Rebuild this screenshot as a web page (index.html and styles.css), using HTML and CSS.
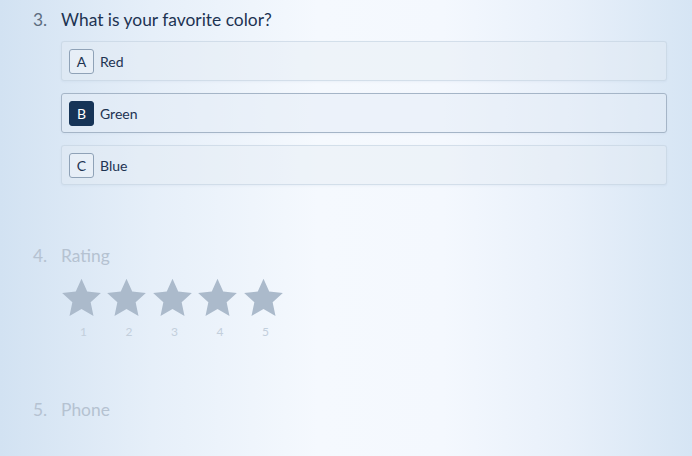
FILE: index.html
```html
<!DOCTYPE html>
<html>
<head>
<meta charset="utf-8">
<link rel="stylesheet" href="styles.css">
</head>
<body>
<div class="page">
  <section class="question">
    <h2 class="q-title"><span class="q-num">3.</span><span class="q-text">What is your favorite color?</span></h2>
    <div class="options">
      <div class="option"><span class="key">A</span><span class="label">Red</span></div>
      <div class="option selected"><span class="key">B</span><span class="label">Green</span></div>
      <div class="option"><span class="key">C</span><span class="label">Blue</span></div>
    </div>
  </section>

  <section class="question faded rating-q">
    <h2 class="q-title"><span class="q-num">4.</span><span class="q-text">Rating</span></h2>
    <div class="stars">
      <div class="star-item"><svg class="star" viewBox="0 0 24 24"><path d="M12 1.6l3.2 7.1 7.6.8-5.7 5.2 1.6 7.6L12 18.4l-6.7 3.9 1.6-7.6-5.7-5.2 7.6-.8z"/></svg><span class="star-num">1</span></div>
      <div class="star-item"><svg class="star" viewBox="0 0 24 24"><path d="M12 1.6l3.2 7.1 7.6.8-5.7 5.2 1.6 7.6L12 18.4l-6.7 3.9 1.6-7.6-5.7-5.2 7.6-.8z"/></svg><span class="star-num">2</span></div>
      <div class="star-item"><svg class="star" viewBox="0 0 24 24"><path d="M12 1.6l3.2 7.1 7.6.8-5.7 5.2 1.6 7.6L12 18.4l-6.7 3.9 1.6-7.6-5.7-5.2 7.6-.8z"/></svg><span class="star-num">3</span></div>
      <div class="star-item"><svg class="star" viewBox="0 0 24 24"><path d="M12 1.6l3.2 7.1 7.6.8-5.7 5.2 1.6 7.6L12 18.4l-6.7 3.9 1.6-7.6-5.7-5.2 7.6-.8z"/></svg><span class="star-num">4</span></div>
      <div class="star-item"><svg class="star" viewBox="0 0 24 24"><path d="M12 1.6l3.2 7.1 7.6.8-5.7 5.2 1.6 7.6L12 18.4l-6.7 3.9 1.6-7.6-5.7-5.2 7.6-.8z"/></svg><span class="star-num">5</span></div>
    </div>
  </section>

  <section class="question faded phone-q">
    <h2 class="q-title"><span class="q-num">5.</span><span class="q-text">Phone</span></h2>
  </section>
</div>
</body>
</html>
```

FILE: styles.css
```css
html, body {
  margin: 0;
  padding: 0;
  height: 100%;
}
body {
  font-family: Lato, "Open Sans", "Liberation Sans", sans-serif;
  background: linear-gradient(90deg, #d2e2f2 0%, #e6eff9 22%, #f5f9fe 46%, #f4f8fe 64%, #e8f0fa 82%, #d6e5f4 100%);
  overflow: hidden;
}
.page {
  padding: 9px 25px 0 33px;
}
.q-title {
  margin: 0;
  display: flex;
  font-size: 17.4px;
  font-weight: 400;
  line-height: 22px;
  color: #1d3352;
}
.q-num {
  width: 28px;
  color: #5d6d80;
}
.options {
  margin: 10px 0 0 28px;
  display: flex;
  flex-direction: column;
  gap: 12px;
}
.option {
  height: 38px;
  display: flex;
  align-items: center;
  padding: 0 7px;
  border: 1px solid rgba(190, 205, 222, 0.55);
  border-radius: 3px;
  background: rgba(228, 235, 243, 0.4);
  box-shadow: 0 1px 2px rgba(120, 145, 175, 0.08);
}
.option.selected {
  border-color: #a5b5c7;
  background: rgba(228, 236, 245, 0.5);
}
.key {
  width: 23px;
  height: 23px;
  border: 1px solid #8fa2b7;
  border-radius: 3px;
  display: flex;
  align-items: center;
  justify-content: center;
  font-size: 14px;
  color: #1d3352;
  background: rgba(255, 255, 255, 0.25);
}
.selected .key {
  background: #163457;
  border-color: #163457;
  color: #ffffff;
}
.label {
  margin-left: 6px;
  font-size: 14px;
  color: #1d3352;
}
.rating-q {
  margin-top: 60px;
}
.faded .q-title,
.faded .q-num {
  color: #b5c2d1;
}
.stars {
  display: flex;
  gap: 5.5px;
  margin: 9px 0 0 28px;
}
.star-item {
  width: 40px;
  display: flex;
  flex-direction: column;
  align-items: center;
}
.star {
  width: 43px;
  height: 43px;
  margin: 0 -2px;
  fill: #abbacb;
}
.star-num {
  margin-top: 6px;
  padding-left: 5px;
  font-size: 12px;
  line-height: 14px;
  color: #c3cfdc;
}
.phone-q {
  margin-top: 60px;
}
```
